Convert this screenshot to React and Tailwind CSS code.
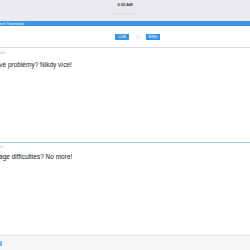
export default function App() {
  return (
    <div className="w-[250px] h-[250px] overflow-hidden bg-white flex flex-col" style={{ fontFamily: '"Liberation Sans", Arial, sans-serif' }}>
      <div className="h-[21px] bg-[#ebebef] flex flex-col items-center">
        <div className="text-[4px] leading-[4px] font-bold text-[#333] mt-[3px]">9:55 AM</div>
        <div className="text-[4px] leading-[4px] text-[#d6d6da] mt-[5px]">Rozpoznat ⌂</div>
      </div>
      <div className="h-[5px] bg-[#3a94e6] flex items-center">
        <div className="text-[4px] leading-[4px] text-white ml-[-2px] whitespace-nowrap">Text Translator</div>
      </div>
      <div className="h-[21px] flex items-center justify-center gap-[6px] pl-[25px]">
        <div className="bg-[#3a94e6] text-white text-[4px] leading-[6px] w-[14px] text-center">CZE</div>
        <div className="text-[#b8daf6] text-[8px] leading-[8px] font-light">&gt;</div>
        <div className="bg-[#3a94e6] text-white text-[4px] leading-[6px] w-[14px] text-center">ENG</div>
      </div>
      <div className="h-px bg-[#dddddd]" />
      <div className="h-[94px] flex flex-col">
        <div className="text-[4px] leading-[4px] text-[#b0b0b0] ml-[-6px] mt-[3px] whitespace-nowrap">Czech</div>
        <div className="text-[6.5px] leading-[8px] text-[#222] ml-[-21px] mt-[6px] whitespace-nowrap">Jazykové problémy? Nikdy více!</div>
      </div>
      <div className="h-px bg-[#9fd0f5]" />
      <div className="flex-1 flex flex-col">
        <div className="text-[4px] leading-[4px] text-[#b0b0b0] ml-[-10px] mt-[2px] whitespace-nowrap">English</div>
        <div className="text-[6.5px] leading-[8px] text-[#222] ml-[-19px] mt-[4px] whitespace-nowrap">Language difficulties? No more!</div>
      </div>
      <div className="h-px bg-[#e2e2e2]" />
      <div className="h-[14px] bg-[#f7f7f7] flex items-center">
        <div className="w-[2px] h-[5px] bg-[#7ab8ea]" />
      </div>
    </div>
  );
}
